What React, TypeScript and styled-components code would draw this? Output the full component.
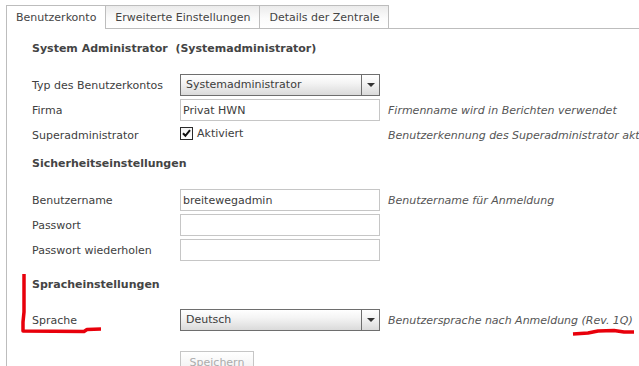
import React from "react";
import styled, { createGlobalStyle } from "styled-components";

const GlobalStyle = createGlobalStyle`
  html, body { margin: 0; padding: 0; background: #fff; overflow: hidden; }
  body {
    font-family: "DejaVu Sans", Verdana, sans-serif;
    font-size: 11px;
    color: #3c3c3c;
  }
`;

const Page = styled.div`
  position: relative;
  width: 720px;
  height: 366px;
  padding: 5px 0 0 6px;
  box-sizing: border-box;
  overflow: hidden;
`;

const TabBar = styled.div`
  display: flex;
  align-items: flex-end;
  height: 23px;
  border-bottom: 1px solid #bdbdbd;
`;

const Tab = styled.div<{ $active?: boolean }>`
  box-sizing: border-box;
  height: ${(p) => (p.$active ? 24 : 23)}px;
  margin-bottom: ${(p) => (p.$active ? -1 : 0)}px;
  padding: 0 9px;
  border: 1px solid #bdbdbd;
  border-bottom: none;
  display: flex;
  align-items: center;
  padding-bottom: ${(p) => (p.$active ? 1 : 0)}px;
  color: #444;
  white-space: nowrap;
  background: ${(p) =>
    p.$active ? "#fff" : "linear-gradient(#ebebeb, #fbfbfb 55%, #fff)"};
  & + & {
    margin-left: -1px;
  }
`;

const Panel = styled.div`
  border-left: 1px solid #bdbdbd;
  padding: 12px 0 0 25px;
  height: 340px;
  box-sizing: border-box;
`;

const Section = styled.section<{ $top: number; $below?: number }>`
  margin-top: ${(p) => p.$top}px;
  & > h2 {
    margin-bottom: ${(p) => p.$below ?? 18}px;
  }
`;

const Heading = styled.h2`
  margin: 0 0 18px;
  font-size: 11px;
  line-height: 16px;
  font-weight: bold;
  color: #444;
  white-space: pre;
`;

const FormGrid = styled.div`
  display: grid;
  grid-template-columns: 148px 200px max-content;
  grid-auto-rows: 22px;
  row-gap: 3px;
  align-items: center;
`;

const Label = styled.div`
  white-space: nowrap;
  color: #404040;
`;

const Hint = styled.div`
  padding-left: 8px;
  font-style: italic;
  color: #555;
  white-space: nowrap;
`;

const Select = styled.div`
  box-sizing: border-box;
  height: 22px;
  display: flex;
  border: 1px solid #6e6e6e;
  background: linear-gradient(#ffffff, #f4f4f4 40%, #dadada);
  color: #3c3c3c;
`;

const SelectValue = styled.div`
  flex: 1;
  padding-left: 5px;
  line-height: 20px;
`;

const SelectArrow = styled.div`
  width: 17px;
  border-left: 1px solid #6e6e6e;
  display: flex;
  align-items: center;
  justify-content: center;
  &::after {
    content: "";
    border-left: 4px solid transparent;
    border-right: 4px solid transparent;
    border-top: 4px solid #333;
  }
`;

const TextInput = styled.input`
  box-sizing: border-box;
  width: 200px;
  height: 22px;
  margin: 0;
  padding: 0 2px;
  border: 1px solid #c6c6c6;
  outline: none;
  font-family: inherit;
  font-size: 11px;
  color: #3c3c3c;
  background: #fff;
`;

const CheckRow = styled.label`
  display: flex;
  align-items: center;
  gap: 4px;
  color: #404040;
  margin-top: -4px;
`;

const CheckBox = styled.span`
  box-sizing: border-box;
  width: 13px;
  height: 13px;
  border: 1px solid #2a2a2a;
  background: linear-gradient(#f4f4f4, #fff);
  display: flex;
  align-items: center;
  justify-content: center;
  flex: none;
`;

const ButtonRow = styled.div`
  padding-left: 148px;
  margin-top: 20px;
`;

const Button = styled.button`
  box-sizing: border-box;
  width: 74px;
  height: 22px;
  margin: 0;
  padding: 0;
  border: 1px solid #c6c6c6;
  background: linear-gradient(#ffffff, #f0f0f0);
  color: #acacac;
  font-family: inherit;
  font-size: 11px;
`;

const Annotations = styled.svg`
  position: absolute;
  left: 0;
  top: 0;
  pointer-events: none;
`;

export default function App() {
  return (
    <>
      <GlobalStyle />
      <Page>
        <TabBar>
          <Tab $active>Benutzerkonto</Tab>
          <Tab>Erweiterte Einstellungen</Tab>
          <Tab>Details der Zentrale</Tab>
        </TabBar>
        <Panel>
          <Section $top={0} $below={17}>
            <Heading>{"System Administrator  (Systemadministrator)"}</Heading>
            <FormGrid>
              <Label>Typ des Benutzerkontos</Label>
              <Select>
                <SelectValue>Systemadministrator</SelectValue>
                <SelectArrow />
              </Select>
              <span />
              <Label>Firma</Label>
              <TextInput defaultValue="Privat HWN" />
              <Hint>Firmenname wird in Berichten verwendet</Hint>
              <Label>Superadministrator</Label>
              <CheckRow>
                <CheckBox>
                  <svg width="11" height="11" viewBox="0 0 11 11">
                    <path
                      d="M2 5.2 L4.4 7.8 L9 2.2"
                      fill="none"
                      stroke="#111"
                      strokeWidth="2"
                    />
                  </svg>
                </CheckBox>
                Aktiviert
              </CheckRow>
              <Hint>Benutzerkennung des Superadministrator aktivieren</Hint>
            </FormGrid>
          </Section>
          <Section $top={10} $below={17}>
            <Heading>Sicherheitseinstellungen</Heading>
            <FormGrid>
              <Label>Benutzername</Label>
              <TextInput defaultValue="breitewegadmin" />
              <Hint>Benutzername für Anmeldung</Hint>
              <Label>Passwort</Label>
              <TextInput type="password" />
              <span />
              <Label>Passwort wiederholen</Label>
              <TextInput type="password" />
              <span />
            </FormGrid>
          </Section>
          <Section $top={16} $below={16}>
            <Heading>Spracheinstellungen</Heading>
            <FormGrid>
              <Label>Sprache</Label>
              <Select>
                <SelectValue>Deutsch</SelectValue>
                <SelectArrow />
              </Select>
              <Hint>Benutzersprache nach Anmeldung (Rev. 1Q)</Hint>
            </FormGrid>
          </Section>
          <ButtonRow>
            <Button disabled>Speichern</Button>
          </ButtonRow>
        </Panel>
        <Annotations width="639" height="366" viewBox="0 0 639 366">
          <path
            d="M24 274 L24 312 L23 322 L23 331 L84 331.5 L87 329.5 L101 329"
            fill="none"
            stroke="#e8000b"
            strokeWidth="3.5"
            strokeLinejoin="round"
          />
          <path
            d="M573 334 L588 333 L598 331 L614 330.5 L624 332 L634 332"
            fill="none"
            stroke="#e8000b"
            strokeWidth="3.5"
            strokeLinejoin="round"
          />
        </Annotations>
      </Page>
    </>
  );
}
